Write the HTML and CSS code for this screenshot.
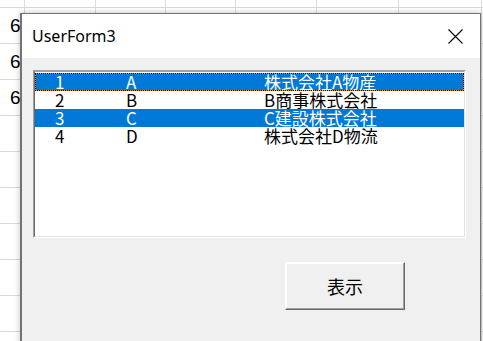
FILE: index.html
```html
<!DOCTYPE html>
<html lang="ja">

<head>
  <meta charset="UTF-8" />
  <meta name="viewport" content="width=device-width, initial-scale=1.0" />
  <title>UserForm3</title>
  <link rel="stylesheet" href="styles.css">
</head>

<body>
  <!-- Worksheet behind the form -->
  <div class="sheet">
    <div class="cell">6</div>
    <div class="cell">6</div>
    <div class="cell">6</div>
  </div>

  <!-- UserForm window -->
  <div class="form-window">
    <div class="title-bar">
      <span class="title">UserForm3</span>
      <svg class="close" width="15" height="15" viewBox="0 0 15 15">
        <path d="M0.5 0.5 L14.5 14.5 M14.5 0.5 L0.5 14.5" stroke="#000" stroke-width="1.1" fill="none" />
      </svg>
    </div>

    <div class="form-body">
      <div class="listbox">
        <div class="listbox-inner">
          <div class="row selected focused">
            <span class="col-no">1</span>
            <span class="col-code">A</span>
            <span class="col-name">株式会社A物産</span>
          </div>
          <div class="row">
            <span class="col-no">2</span>
            <span class="col-code">B</span>
            <span class="col-name">B商事株式会社</span>
          </div>
          <div class="row selected">
            <span class="col-no">3</span>
            <span class="col-code">C</span>
            <span class="col-name">C建設株式会社</span>
          </div>
          <div class="row">
            <span class="col-no">4</span>
            <span class="col-code">D</span>
            <span class="col-name">株式会社D物流</span>
          </div>
        </div>
      </div>

      <button class="show-button" type="button">表示</button>
    </div>
  </div>
</body>

</html>
```

FILE: styles.css
```css
* {
  margin: 0;
  padding: 0;
  box-sizing: border-box;
}

html,
body {
  width: 483px;
  height: 341px;
  overflow: hidden;
}

body {
  position: relative;
  font-family: "Noto Sans CJK JP", sans-serif;
  background-color: #fff;
}

/* Worksheet grid */
.sheet {
  height: 100%;
  padding-top: 8px;
  background:
    linear-gradient(to bottom, #dadada 1px, transparent 1px) 0 7px / 100% 36px,
    linear-gradient(#dadada, #dadada) 24px 0 / 1px 100% no-repeat,
    linear-gradient(#dadada, #dadada) 95px 0 / 1px 100% no-repeat,
    linear-gradient(#dadada, #dadada) 165px 0 / 1px 100% no-repeat,
    linear-gradient(#dadada, #dadada) 235px 0 / 1px 100% no-repeat,
    linear-gradient(#dadada, #dadada) 316px 0 / 1px 100% no-repeat,
    linear-gradient(#dadada, #dadada) 398px 0 / 1px 100% no-repeat,
    linear-gradient(#dadada, #dadada) 481px 0 / 1px 100% no-repeat;
  background-color: #fff;
}

.cell {
  height: 36px;
  padding-left: 10px;
  font-family: "Liberation Sans", Arial, sans-serif;
  font-size: 19px;
  line-height: 36px;
  color: #000;
}

/* Form window */
.form-window {
  position: absolute;
  left: 20px;
  top: 13px;
  width: 461px;
  height: 340px;
  border: 1px solid #737373;
  border-left-width: 2px;
  background: #f0f0f0;
  box-shadow: 0 0 6px rgba(0, 0, 0, 0.25);
}

.title-bar {
  display: flex;
  align-items: center;
  justify-content: space-between;
  height: 44px;
  padding: 0 17px 0 10px;
  background: #fff;
}

.title {
  font-family: "Noto Sans", sans-serif;
  font-size: 16px;
  color: #000;
}

.close {
  display: block;
}

.form-body {
  padding: 12px 0 0 11px;
}

/* List box with sunken edge */
.listbox {
  width: 433px;
  height: 168px;
  border: 1px solid;
  border-color: #a0a0a0 #fff #fff #a0a0a0;
  background: #fff;
}

.listbox-inner {
  height: 100%;
  padding-top: 1px;
  border: 1px solid;
  border-color: #a0a0a0 #e3e3e3 #e3e3e3 #696969;
  background: #fff;
}

.row {
  display: grid;
  grid-template-columns: 91px 138px 1fr;
  height: 18px;
  font-size: 17px;
  line-height: 18px;
  color: #000;
  white-space: nowrap;
}

.row.selected {
  background: #0078d7;
  color: #fff;
}

.row.focused {
  outline: 1px dotted #000;
  outline-offset: -1px;
  box-shadow: inset 0 0 0 1px #ff8a00;
}

.col-no {
  padding-left: 20px;
}

/* Command button */
.show-button {
  display: block;
  width: 120px;
  height: 48px;
  margin: 24px 0 0 252px;
  font-family: "Noto Sans CJK JP", sans-serif;
  font-size: 18px;
  color: #000;
  background: #f0f0f0;
  border: 1px solid;
  border-color: #fff #696969 #696969 #fff;
  box-shadow: inset -1px -1px 0 #a0a0a0, inset 1px 1px 0 #fff;
}
```
